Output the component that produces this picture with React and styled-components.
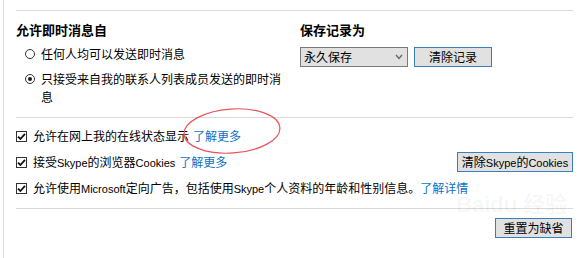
import React from "react";
import styled, { createGlobalStyle } from "styled-components";

const Global = createGlobalStyle`
	body {
		margin: 0;
		background: #fff;
		font-family: "Noto Sans CJK SC", "Noto Sans", sans-serif;
		font-size: 12px;
		color: #000;
	}
`;

const Frame = styled.div`
	position: relative;
	box-sizing: border-box;
	height: 258px;
	margin-left: 3px;
	border-left: 1px solid #dcdcdc;
	padding: 10px 10px 0 12px;
	overflow: hidden;
`;

const Section = styled.section`
	border-top: 1px solid #d9d9d9;
	padding: ${(p) => p.$pad};
`;

const TopGrid = styled.div`
	display: grid;
	grid-template-columns: 284px 1fr;
`;

const Heading = styled.div`
	font-size: 13px;
	font-weight: 700;
	line-height: 18px;
`;

const RadioList = styled.div`
	display: flex;
	flex-direction: column;
	gap: 7px;
	margin-top: 6px;
`;

const RadioRow = styled.label`
	display: flex;
	align-items: flex-start;
	gap: 6px;
	padding-left: 9px;
	line-height: 18px;
`;

const RadioDot = styled.span`
	flex: none;
	box-sizing: border-box;
	width: 10px;
	height: 10px;
	margin-top: 4px;
	border: 1px solid #333;
	border-radius: 50%;
	background: #fff;
	display: flex;
	align-items: center;
	justify-content: center;

	&::after {
		content: "";
		width: 4px;
		height: 4px;
		border-radius: 50%;
		background: ${(p) => (p.$checked ? "#1a1a1a" : "transparent")};
	}
`;

const RadioText = styled.span`
	max-width: 245px;
`;

const ControlRow = styled.div`
	display: flex;
	gap: 6px;
	margin-top: 8px;
`;

const Select = styled.div`
	box-sizing: border-box;
	width: 108px;
	height: 20px;
	border: 1px solid #7a7a7a;
	background: #e1e1e1;
	display: flex;
	align-items: center;
	justify-content: space-between;
	padding: 0 4px 0 3px;
	line-height: 18px;
`;

const Button = styled.button`
	box-sizing: border-box;
	width: ${(p) => p.$w}px;
	height: 20px;
	padding: 0;
	border: 1px solid #3a7fbf;
	background: #e1e1e1;
	font-family: inherit;
	font-size: 12px;
	line-height: 18px;
	color: #000;
	white-space: nowrap;
`;

// latin words render in a smaller sans face next to the CJK text
const Latin = styled.span`
	font-family: "Liberation Sans", Arial, sans-serif;
	font-size: 11px;
`;

const CheckList = styled.div`
	display: flex;
	flex-direction: column;
	gap: 6px;
`;

const CheckRow = styled.div`
	display: flex;
	align-items: center;
	justify-content: space-between;
	height: 20px;
`;

const CheckLabel = styled.label`
	display: flex;
	align-items: center;
	gap: 6px;
	white-space: nowrap;
	line-height: 18px;
`;

const Box = styled.span`
	flex: none;
	box-sizing: border-box;
	width: 11px;
	height: 11px;
	border: 1px solid #333;
	background: #fff;
	display: flex;
	align-items: center;
	justify-content: center;
`;

const Link = styled.a`
	color: #0a72c8;
	text-decoration: none;
	margin-left: ${(p) => p.$gap ?? 4}px;
`;

const Footer = styled.div`
	display: flex;
	justify-content: flex-end;
	padding-right: 1px;
`;

const Ellipse = styled.svg`
	position: absolute;
	left: 176px;
	top: 104px;
	pointer-events: none;
`;

const Watermark = styled.div`
	position: absolute;
	left: 452px;
	top: 194px;
	color: rgba(0, 0, 0, 0.05);
	font-family: "Liberation Sans", "Noto Sans CJK SC", sans-serif;
	font-size: 22px;
	font-weight: 700;
	line-height: 1;
	white-space: nowrap;
	pointer-events: none;
`;

function Check() {
	return (
		<Box>
			<svg width="9" height="9" viewBox="0 0 9 9">
				<path d="M1 4.6 L3.4 7 L8 1.8" fill="none" stroke="#111" strokeWidth="1.8" />
			</svg>
		</Box>
	);
}

export default function App() {
	return (
		<>
			<Global />
			<Frame>
				<Section $pad="10px 0 11px">
					<TopGrid>
						<div>
							<Heading>允许即时消息自</Heading>
							<RadioList>
								<RadioRow>
									<RadioDot />
									<RadioText>任何人均可以发送即时消息</RadioText>
								</RadioRow>
								<RadioRow>
									<RadioDot $checked />
									<RadioText>只接受来自我的联系人列表成员发送的即时消息</RadioText>
								</RadioRow>
							</RadioList>
						</div>
						<div>
							<Heading>保存记录为</Heading>
							<ControlRow>
								<Select>
									<span>永久保存</span>
									<svg width="8" height="6" viewBox="0 0 8 6">
										<path d="M1 1 L4 4.5 L7 1" fill="none" stroke="#666" strokeWidth="1.3" />
									</svg>
								</Select>
								<Button $w={78}>清除记录</Button>
							</ControlRow>
						</div>
					</TopGrid>
				</Section>
				<Section $pad="8px 0 10px">
					<CheckList>
						<CheckRow>
							<CheckLabel>
								<Check />
								<span>
									允许在网上我的在线状态显示<Link href="#">了解更多</Link>
								</span>
							</CheckLabel>
						</CheckRow>
						<CheckRow>
							<CheckLabel>
								<Check />
								<span>
									接受<Latin>Skype</Latin>的浏览器<Latin>Cookies</Latin>
									<Link href="#">了解更多</Link>
								</span>
							</CheckLabel>
							<Button $w={116}>
								清除<Latin>Skype</Latin>的<Latin>Cookies</Latin>
							</Button>
						</CheckRow>
						<CheckRow>
							<CheckLabel>
								<Check />
								<span>
									允许使用<Latin>Microsoft</Latin>定向广告，包括使用<Latin>Skype</Latin>
									个人资料的年龄和性别信息。
									<Link href="#" $gap={0}>了解详情</Link>
								</span>
							</CheckLabel>
						</CheckRow>
					</CheckList>
				</Section>
				<Section $pad="9px 0 0">
					<Footer>
						<Button $w={77}>重置为缺省</Button>
					</Footer>
				</Section>
				<Watermark>Baidu 经验</Watermark>
				<Ellipse width="104" height="54" viewBox="0 0 104 54">
					<ellipse cx="52" cy="27" rx="48" ry="22" fill="none" stroke="#e9545c" strokeWidth="1.2" transform="rotate(-4 52 27)" />
				</Ellipse>
			</Frame>
		</>
	);
}
